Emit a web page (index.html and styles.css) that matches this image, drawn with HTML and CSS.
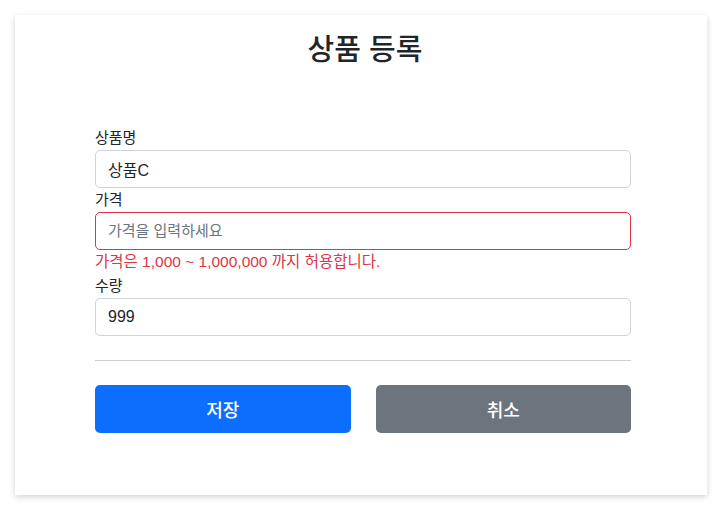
FILE: index.html
```html
<!DOCTYPE html>
<html lang="ko">
<head>
<meta charset="utf-8">
<link rel="stylesheet" href="styles.css">
</head>
<body>
<div class="card">
  <h2 class="title">상품 등록</h2>
  <form class="form">
    <label class="label" for="itemName">상품명</label>
    <input class="input" id="itemName" type="text" value="상품C">
    <label class="label" for="price">가격</label>
    <input class="input invalid" id="price" type="text" placeholder="가격을 입력하세요">
    <div class="feedback">가격은 1,000 ~ 1,000,000 까지 허용합니다.</div>
    <label class="label" for="quantity">수량</label>
    <input class="input" id="quantity" type="text" value="999">
    <hr class="divider">
    <div class="actions">
      <button class="btn btn-primary" type="button">저장</button>
      <button class="btn btn-secondary" type="button">취소</button>
    </div>
  </form>
</div>
</body>
</html>
```
FILE: styles.css
```css
html, body {
  margin: 0;
  padding: 0;
  background: #ffffff;
}
body {
  font-family: "Liberation Sans", "Noto Sans CJK KR", sans-serif;
  color: #212529;
  font-size: 16px;
  line-height: 24px;
  padding: 15px;
}
.card {
  background: #fff;
  height: 480px;
  box-sizing: border-box;
  box-shadow: 0 2px 6px rgba(0, 0, 0, 0.18);
  padding: 18px 76px 0 80px;
}
.title {
  margin: 0 -4px 0 0;
  text-align: center;
  font-size: 29px;
  font-weight: 500;
  line-height: 34px;
}
.form {
  display: flex;
  flex-direction: column;
  margin-top: 59px;
}
.label {
  display: block;
  font-size: 15px;
  line-height: 24px;
}
.input {
  display: block;
  box-sizing: border-box;
  width: 100%;
  height: 38px;
  padding: 6px 12px;
  font-family: inherit;
  font-size: 16px;
  color: #212529;
  border: 1px solid #ced4da;
  border-radius: 5px;
  background: #fff;
  margin: 0;
  outline: none;
}
.input::placeholder {
  color: #6c757d;
  font-size: 15px;
}
.input.invalid {
  border-color: #dc3545;
}
.feedback {
  color: #dc3545;
  font-size: 15.5px;
  line-height: 24px;
}
.divider {
  border: 0;
  border-top: 1px solid #d0d0d0;
  margin: 24px 0 24px;
  width: 100%;
}
.actions {
  display: flex;
  gap: 25px;
}
.btn {
  flex: 1;
  height: 48px;
  border: 0;
  border-radius: 5px;
  color: #fff;
  font-family: inherit;
  font-size: 18px;
  font-weight: 500;
  cursor: pointer;
}
.btn-primary {
  background: #0d6efd;
}
.btn-secondary {
  background: #6c757d;
}
```
